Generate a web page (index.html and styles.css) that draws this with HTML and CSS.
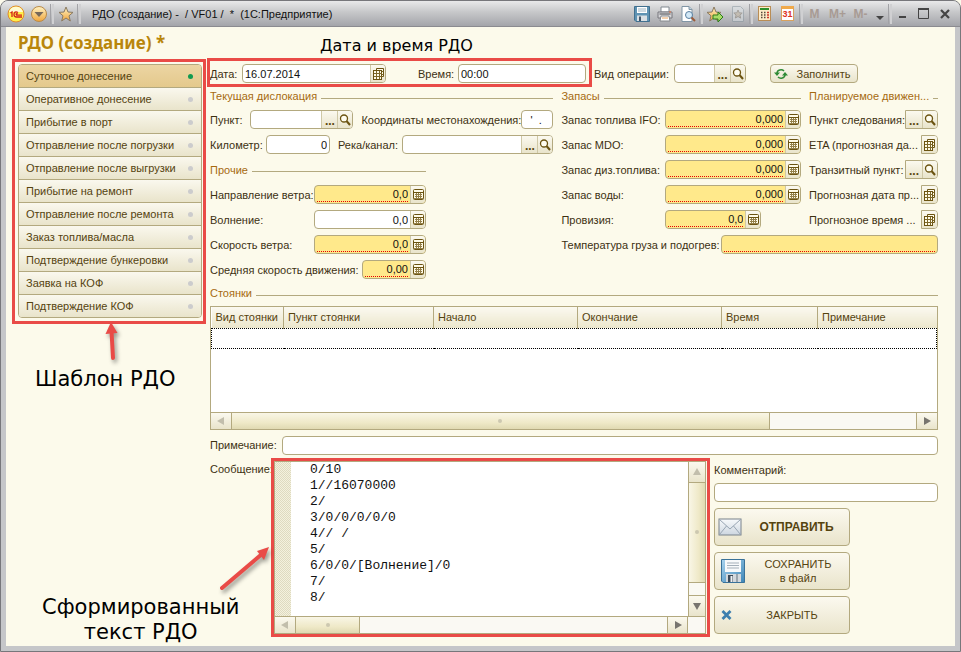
FILE: index.html
```html
<!DOCTYPE html>
<html lang="ru">
<head>
<meta charset="utf-8">
<title>РДО (создание)</title>
<link rel="stylesheet" href="styles.css">
</head>
<body>
<svg class="defs" aria-hidden="true">
  <defs>
    <linearGradient id="gold" x1="0" y1="0" x2="0" y2="1"><stop offset="0" stop-color="#fff3c4"/><stop offset="1" stop-color="#f0a63c"/></linearGradient>
    <linearGradient id="paleblue" x1="0" y1="0" x2="0" y2="1"><stop offset="0" stop-color="#f8fafc"/><stop offset="1" stop-color="#cdd6e0"/></linearGradient>
    <linearGradient id="blue" x1="0" y1="0" x2="1" y2="1"><stop offset="0" stop-color="#a9d4ee"/><stop offset="1" stop-color="#3d86b8"/></linearGradient>
  </defs>
  <symbol id="calc" viewBox="0 0 11 12"><rect x=".5" y=".5" width="10" height="10" rx="1" fill="#fffbe8" stroke="#6b5310"/><path d="M1 3.500h9" stroke="#6b5310"/><path d="M2 5.500h7M2 7.500h7M1 9.500h9M3.500 4v6M5.500 4v6M7.500 4v6" stroke="#94804a" fill="none"/></symbol>
  <symbol id="cal" viewBox="0 0 11 12"><path d="M3.500 2.500V.5h7v8h-2" fill="#fffbe8" stroke="#6b5310"/><rect x=".5" y="2.500" width="8" height="9" fill="#fffbe8" stroke="#6b5310"/><path d="M1 5.500h8M1 8.500h8M3.500 3v8M6.500 3v8M9 3.500h1.500M9 6.500h1.500" stroke="#7d6828" fill="none"/></symbol>
  <symbol id="loupe" viewBox="0 0 12 12"><circle cx="5" cy="4.500" r="3.500" fill="#fffdf0" stroke="#6b5310" stroke-width="1.300"/><path d="M7.500 7l3.500 4" stroke="#6b5310" stroke-width="2"/></symbol>
  <symbol id="star" viewBox="0 0 16 16"><path d="M8 1l2 5 5 .4-4 3.400 1.300 5.200L8 12l-4.300 3L5 9.800 1 6.400 6 6z" fill="url(#gold)" stroke="#8a7a62"/></symbol>
  <symbol id="tri" viewBox="0 0 8 8"><path d="M0 4l7-4v8z"/></symbol>
</svg>

<div class="window">
  <header class="titlebar">
    <button class="tb" aria-label="Главное меню"><svg width="18" height="18" viewBox="0 0 18 18"><circle cx="9" cy="9" r="8" fill="#fff04a" stroke="#e08a2c"/><path d="M2 7a7.300 7.300 0 0 1 14 0" fill="#fffbd0"/><path d="M3.500 8l1.500-1v5M11 7.500C8.500 5.800 7 7.500 7 9.500s1 2.500 2.500 2.500H15M10.700 9c-1.500-1.200-2 .3-1 1.200H15" stroke="#d3231b" stroke-width="1.300" fill="none"/></svg></button>
    <button class="tb" aria-label="Меню"><svg width="18" height="18" viewBox="0 0 18 18"><circle cx="9" cy="9" r="7.500" fill="url(#gold)" stroke="#b98a4a"/><path d="M4.500 7h9L9 12z" fill="#76685a"/></svg></button>
    <span class="sep"></span>
    <button class="tb" aria-label="Избранное"><svg width="16" height="16"><use href="#star"/></svg></button>
    <span class="sep"></span>
    <h1 class="caption">РДО (создание) -&nbsp; / VF01 /&nbsp; * &nbsp;(1С:Предприятие)</h1>
    <div class="tools">
      <button class="tb" aria-label="Сохранить"><svg width="16" height="16" viewBox="0 0 16 16"><path d="M.5.500h15v15H2L.5 14z" fill="#5f93b3" stroke="#41708f"/><path d="M3 1h10v6H3z" fill="#fff"/><path d="M4 3h8M4 5h8" stroke="#9db4c2"/><path d="M3 9.500h10V15H3z" fill="#d9dfe3"/><path d="M5 10.500h2V15H5z" fill="#42566a"/></svg></button>
      <button class="tb" aria-label="Печать"><svg width="16" height="16" viewBox="0 0 16 16"><path d="M4 1h8v5H4z" fill="#fff" stroke="#828a92"/><path d="M1 6h14v6H1z" fill="#d5d5d8" stroke="#77777c"/><path d="M2.500 8h11" stroke="#4e5055"/><path d="M4 10h8l1 5H3z" fill="#fff" stroke="#85888c"/><path d="M5 12h6" stroke="#e9a35c"/><path d="M12 6h2" stroke="#e16d3c" stroke-width="1"/></svg></button>
      <button class="tb" aria-label="Просмотр"><svg width="16" height="16" viewBox="0 0 16 16"><path d="M2 .5h7l3 3v12H2z" fill="#fff" stroke="#8095a5"/><path d="M9 .5v3h3" fill="#bfd3e0" stroke="#8095a5"/><circle cx="9" cy="9" r="3.500" fill="#d3e9f7" stroke="#597fa0"/><path d="M11.500 11.500L15 15" stroke="#9b5b3a" stroke-width="2"/></svg></button>
      <span class="sep"></span>
      <button class="tb" aria-label="В избранное"><svg width="18" height="16" viewBox="0 0 18 16"><use href="#star" width="16" height="16"/><path d="M7 9h5V6l5 5-5 5v-3H7z" fill="#a9dc67" stroke="#2c7d1a"/></svg></button>
      <button class="tb dim" aria-label="Список избранного"><svg width="14" height="16" viewBox="0 0 14 16"><path d="M1.500.5h8l3 3v12h-11z" fill="#dbe1e5" stroke="#87959e"/><path d="M7 4l1.200 2.800 3 .3-2.300 2 .8 3L7 10.500 4.300 12l.8-3-2.300-2 3-.2z" fill="#c4b7a0" stroke="#847c70"/></svg></button>
      <span class="sep"></span>
      <button class="tb" aria-label="Калькулятор"><svg width="13" height="15" viewBox="0 0 13 15"><rect x=".5" y=".5" width="12" height="14" fill="#fdebc8" stroke="#b98d55"/><path d="M2 2h9v2H2z" fill="#2c8f2c"/><path d="M3 6.500h1.500M6 6.500h1.500M3 9h1.500M6 9h1.500M3 11.500h1.500M6 11.500h1.500" stroke="#57493c" stroke-width="1.500"/><path d="M9 6.500h2M9 9h2M9 11.500h2" stroke="#d0382b" stroke-width="1.500"/></svg></button>
      <button class="tb" aria-label="Календарь"><span class="date-icon">31</span></button>
      <span class="sep"></span>
      <button class="tb mem">M</button>
      <button class="tb mem">M+</button>
      <button class="tb mem">M-</button>
      <button class="tb slim" aria-label="Ещё"><svg width="8" height="14" viewBox="0 0 8 14"><path d="M0 9h8l-4 4z" fill="#444"/></svg></button>
      <span class="sep"></span>
      <button class="tb win" aria-label="Свернуть"><svg width="11" height="11" viewBox="0 0 11 11"><path d="M2 9h7" stroke="#444" stroke-width="2"/></svg></button>
      <button class="tb win" aria-label="Развернуть"><svg width="11" height="11" viewBox="0 0 11 11"><path d="M.5 1v9.500h10V1" fill="none" stroke="#444"/><path d="M0 1h11" stroke="#444" stroke-width="2"/></svg></button>
      <button class="tb win" aria-label="Закрыть"><svg width="10" height="10" viewBox="0 0 10 10"><path d="M1 1l8 8M9 1L1 9" stroke="#444" stroke-width="2.200"/></svg></button>
    </div>
  </header>

  <main class="client">
    <h2 class="heading">РДО (создание) *</h2>
    <div class="columns">
      <nav class="side framed">
        <ul class="templates">
          <li><button class="active">Суточное донесение</button></li>
          <li><button>Оперативное донесение</button></li>
          <li><button>Прибытие в порт</button></li>
          <li><button>Отправление после погрузки</button></li>
          <li><button>Отправление после выгрузки</button></li>
          <li><button>Прибытие на ремонт</button></li>
          <li><button>Отправление после ремонта</button></li>
          <li><button>Заказ топлива/масла</button></li>
          <li><button>Подтверждение бункеровки</button></li>
          <li><button>Заявка на КОФ</button></li>
          <li><button>Подтверждение КОФ</button></li>
        </ul>
      </nav>

      <form class="form">
        <div class="row top">
          <div class="row when framed">
            <label for="date" class="w32">Дата:</label>
            <div class="field f144"><input id="date" value="16.07.2014"><button type="button" aria-label="Выбрать дату"><svg width="11" height="12"><use href="#cal"/></svg></button></div>
            <label for="time" class="w40 ml32">Время:</label>
            <div class="field grow"><input id="time" value="00:00"></div>
          </div>
          <label for="op" class="w80">Вид операции:</label>
          <div class="field f72"><input id="op"><button type="button" class="dots">...</button><button type="button" aria-label="Найти"><svg width="12" height="12"><use href="#loupe"/></svg></button></div>
          <button type="button" class="push fill"><svg width="14" height="12" viewBox="0 0 14 12"><path d="M3 5a4 3.500 0 0 1 7-2M11 7a4 3.500 0 0 1-7 2" fill="none" stroke="#2f8a35" stroke-width="1.600"/><path d="M0 4.500h6L3 8zM8 7.500h6L11 4z" fill="#2f8a35"/></svg><span>Заполнить</span></button>
        </div>

        <div class="groups">
          <div class="left">
            <section>
              <h3><span>Текущая дислокация</span></h3>
              <div class="row">
                <label for="pt" class="w40">Пункт:</label>
                <div class="field grow"><input id="pt"><button type="button" class="dots">...</button><button type="button" aria-label="Найти"><svg width="12" height="12"><use href="#loupe"/></svg></button></div>
                <label for="xy" class="w160 ml8">Координаты местонахождения:</label>
                <div class="field f32"><input id="xy" value="  '  ."></div>
              </div>
              <div class="row">
                <label for="km" class="w56">Километр:</label>
                <div class="field f64"><input id="km" class="num" value="0"></div>
                <label for="river" class="w64 ml8">Река/канал:</label>
                <div class="field grow"><input id="river"><button type="button" class="dots">...</button><button type="button" aria-label="Найти"><svg width="12" height="12"><use href="#loupe"/></svg></button></div>
              </div>
            </section>
            <section class="other">
              <h3 class="tall"><span>Прочие</span></h3>
              <div class="row"><label for="wd" class="w104">Направление ветра:</label><div class="field req grow"><input id="wd" class="num" value="0,0"><button type="button" aria-label="Калькулятор"><svg width="11" height="12"><use href="#calc"/></svg></button></div></div>
              <div class="row"><label for="wave" class="w104">Волнение:</label><div class="field grow"><input id="wave" class="num" value="0,0"><button type="button" aria-label="Калькулятор"><svg width="11" height="12"><use href="#calc"/></svg></button></div></div>
              <div class="row"><label for="ws" class="w104">Скорость ветра:</label><div class="field req grow"><input id="ws" class="num" value="0,0"><button type="button" aria-label="Калькулятор"><svg width="11" height="12"><use href="#calc"/></svg></button></div></div>
              <div class="row"><label for="avg" class="w152">Средняя скорость движения:</label><div class="field req grow"><input id="avg" class="num" value="0,00"><button type="button" aria-label="Калькулятор"><svg width="11" height="12"><use href="#calc"/></svg></button></div></div>
            </section>
          </div>

          <section class="stock">
            <h3><span>Запасы</span></h3>
            <div class="row"><label for="ifo" class="w104">Запас топлива IFO:</label><div class="field req grow"><input id="ifo" class="num" value="0,000"><button type="button" aria-label="Калькулятор"><svg width="11" height="12"><use href="#calc"/></svg></button></div></div>
            <div class="row"><label for="mdo" class="w104">Запас MDO:</label><div class="field req grow"><input id="mdo" class="num" value="0,000"><button type="button" aria-label="Калькулятор"><svg width="11" height="12"><use href="#calc"/></svg></button></div></div>
            <div class="row"><label for="dt" class="w104">Запас диз.топлива:</label><div class="field req grow"><input id="dt" class="num" value="0,000"><button type="button" aria-label="Калькулятор"><svg width="11" height="12"><use href="#calc"/></svg></button></div></div>
            <div class="row"><label for="water" class="w104">Запас воды:</label><div class="field req grow"><input id="water" class="num" value="0,000"><button type="button" aria-label="Калькулятор"><svg width="11" height="12"><use href="#calc"/></svg></button></div></div>
            <div class="row"><label for="food" class="w104">Провизия:</label><div class="field req f96"><input id="food" class="num" value="0,0"><button type="button" aria-label="Калькулятор"><svg width="11" height="12"><use href="#calc"/></svg></button></div></div>
          </section>

          <section class="plan">
            <h3><span>Планируемое движен...</span></h3>
            <div class="row"><span class="lbl">Пункт следования:</span><div class="field bare"><button type="button" class="dots">...</button><button type="button" aria-label="Найти"><svg width="12" height="12"><use href="#loupe"/></svg></button></div></div>
            <div class="row"><span class="lbl">ETA (прогнозная да...</span><div class="field bare"><button type="button" aria-label="Выбрать дату"><svg width="11" height="12"><use href="#cal"/></svg></button></div></div>
            <div class="row"><span class="lbl">Транзитный пункт:</span><div class="field bare"><button type="button" class="dots">...</button><button type="button" aria-label="Найти"><svg width="12" height="12"><use href="#loupe"/></svg></button></div></div>
            <div class="row"><span class="lbl">Прогнозная дата пр...</span><div class="field bare"><button type="button" aria-label="Выбрать дату"><svg width="11" height="12"><use href="#cal"/></svg></button></div></div>
            <div class="row"><span class="lbl">Прогнозное время ...</span><div class="field bare"><button type="button" aria-label="Выбрать дату"><svg width="11" height="12"><use href="#cal"/></svg></button></div></div>
          </section>

          <div class="row temp"><label for="temp" class="w160">Температура груза и подогрев:</label><div class="field req grow"><input id="temp"></div></div>
        </div>

        <section>
          <h3><span>Стоянки</span></h3>
          <div class="grid">
            <table>
              <colgroup><col class="c1"><col class="c2"><col class="c3"><col class="c3"><col class="c4"><col></colgroup>
              <thead><tr><th>Вид стоянки</th><th>Пункт стоянки</th><th>Начало</th><th>Окончание</th><th>Время</th><th>Примечание</th></tr></thead>
              <tbody><tr><td></td><td></td><td></td><td></td><td></td><td></td></tr></tbody>
            </table>
            <div class="scroll">
              <button type="button" class="off" aria-label="Влево"><svg width="8" height="8"><use href="#tri"/></svg></button>
              <div class="thumb t-wide"></div><div class="track t-rest"></div>
              <button type="button" aria-label="Вправо"><svg class="flip" width="8" height="8"><use href="#tri"/></svg></button>
            </div>
          </div>
        </section>

        <div class="row note"><label for="note" class="w72">Примечание:</label><div class="field grow"><input id="note"></div></div>

        <div class="bottom">
          <label for="msg" class="w64 msg-label">Сообщение:</label>
          <div class="message framed">
            <div class="message-main">
              <div class="gutter"></div>
              <textarea id="msg" rows="10" wrap="off">0/10
1//16070000
2/
3/0/0/0/0/0
4// /
5/
6/0/0/[Волнение]/0
7/
8/</textarea>
              <div class="scroll vert">
                <button type="button" class="off" aria-label="Вверх"><svg class="up" width="8" height="8"><use href="#tri"/></svg></button>
                <div class="thumb t-tall"></div><div class="track t-short"></div>
                <button type="button" aria-label="Вниз"><svg class="down" width="8" height="8"><use href="#tri"/></svg></button>
              </div>
            </div>
            <div class="scroll corner">
              <button type="button" class="off" aria-label="Влево"><svg width="8" height="8"><use href="#tri"/></svg></button>
              <div class="thumb t-small"></div><div class="track t-large"></div>
              <button type="button" aria-label="Вправо"><svg class="flip" width="8" height="8"><use href="#tri"/></svg></button>
            </div>
          </div>
          <div class="actions">
            <label for="comment">Комментарий:</label>
            <div class="field"><input id="comment"></div>
            <button type="button" class="push big"><svg width="24" height="18" viewBox="0 0 24 18"><rect x="1" y="1" width="22" height="16" fill="url(#paleblue)" stroke="#78828c"/><path d="M1.500 1.500L12 11 22.500 1.500M1.500 16.500L8.500 8M22.500 16.500L15.500 8" fill="none" stroke="#98a5b3"/></svg><b>ОТПРАВИТЬ</b></button>
            <button type="button" class="push big"><svg class="inset" width="24" height="24" viewBox="0 0 24 24"><path d="M.5.500h23v23H2L.5 22z" fill="url(#blue)" stroke="#3a7299"/><path d="M4 1h16v12H4z" fill="#f8fafb"/><path d="M6 4h12M6 6.500h12M6 9h12" stroke="#a5b0b9"/><path d="M5 15h15v8H5z" fill="#d4d9dd"/><path d="M7 16h5v7H7z" fill="#3c4a58"/><path d="M9.500 17h2v6h-2z" fill="#eef1f3"/><path d="M15 15h2v8h-2z" fill="#9ba5ad"/></svg><span>СОХРАНИТЬ<br>в файл</span></button>
            <button type="button" class="push big"><svg class="inset" width="12" height="10" viewBox="0 0 12 10"><path d="M1.500 1l8 8M9.500 1l-8 8" stroke="#3d7fae" stroke-width="2.800"/></svg><span>ЗАКРЫТЬ</span></button>
          </div>
        </div>
      </form>
    </div>

    <p class="callout c-date">Дата и время РДО</p>
    <p class="callout c-template">Шаблон РДО</p>
    <p class="callout c-text">Сформированный<br>текст РДО</p>
    <svg class="arrow a-up" width="20" height="44" viewBox="0 0 20 44"><path d="M9.500 9l1.500 27" stroke="#e94b47" stroke-width="4" stroke-linecap="round"/><path d="M9 0L3.500 12l12-1z" fill="#e94b47"/></svg>
    <svg class="arrow a-diag" width="58" height="52" viewBox="0 0 58 52"><path d="M4 43L44 9" stroke="#e94b47" stroke-width="4" stroke-linecap="round"/><path d="M51 2L39 6l7 9z" fill="#e94b47"/></svg>
  </main>
</div>
</body>
</html>
```
FILE: styles.css
```css
:root {
  --line: #b3a97f;
  --ink: #4b3c12;
  --paper: #fcfaeb;
  --red: #e94b47;
}
* { box-sizing: border-box; }
body {
  margin: 0;
  background: #fcfaeb;
  font: 11px/14px "Liberation Sans", Arial, sans-serif;
  color: #3d3112;
}
button, input, textarea { font: inherit; color: inherit; margin: 0; padding: 0; }
h1, h2, h3, p, ul { margin: 0; padding: 0; font-size: inherit; font-weight: normal; }
.defs { position: absolute; width: 0; height: 0; }

.window {
  display: flex;
  flex-direction: column;
  min-height: 100vh;
  padding: 0 5px 5px;
  background: #c5c6c9;
  border: 1px solid #77777b;
  border-radius: 8px 8px 0 0;
}
.titlebar {
  display: flex;
  align-items: center;
  height: 26px;
  margin: 0 -5px;
  padding: 0 5px 0 3px;
  border-bottom: 1px solid #8b8b90;
  border-radius: 7px 7px 0 0;
  background: linear-gradient(#e9e9ea, #c6c7c9 45%, #a4a5aa);
}
.tb {
  display: flex;
  align-items: center;
  justify-content: center;
  width: 23px;
  height: 22px;
  border: 0;
  background: none;
}
.sep { width: 4px; height: 20px; border-left: 1px solid #a2a2a6; border-right: 2px solid #d0d0d2; }
.slim { width: 16px; }
.win { width: 21px; }
.dim { opacity: .5; }
.mem { color: #a89b94; font-weight: bold; font-size: 12px; }
.caption { color: #111; font-size: 11px; margin-left: 11px; white-space: nowrap; }
.tools { display: flex; align-items: center; margin-left: auto; }
.date-icon {
  width: 13px;
  height: 15px;
  border: 1px solid #d9a25e;
  border-top: 3px solid #f0a94a;
  background: #fff;
  color: #dd3322;
  font: bold 9px/11px "Liberation Sans", sans-serif;
}

.client { position: relative; flex: 1; padding: 6px 17px 11px 12px; background: var(--paper); }
.heading { font: bold 17px/20px "Noto Sans", sans-serif; color: #b9860b; margin-bottom: 11px; }
.columns { display: flex; gap: 8px; }
.side { flex: none; width: 184px; align-self: flex-start; }
.form { flex: 1; min-width: 0; }

.framed { position: relative; }
.framed::after {
  content: "";
  position: absolute;
  inset: -5px -4px -6px -6px;
  border: 3px solid var(--red);
  pointer-events: none;
}
.when.framed::after { inset: -6px -6px -4px -3px; }
.message.framed::after { inset: -4px -5px -4px -4px; }

.templates { list-style: none; border: 1px solid var(--line); border-radius: 4px; overflow: hidden; }
.templates li + li { border-top: 1px solid var(--line); }
.templates button {
  display: flex;
  align-items: center;
  justify-content: space-between;
  width: 100%;
  height: 22px;
  padding: 0 8px 0 7px;
  border: 0;
  color: #55430f;
  background: linear-gradient(#faf8ee, #e9e4cb);
}
.templates button::after { content: ""; width: 5px; height: 5px; border-radius: 50%; background: #cccccd; }
.templates .active { background: linear-gradient(#ecd5a3, #e4c98c); }
.templates .active::after { background: #129a50; }

.row { display: flex; align-items: center; height: 25px; }
.top { height: 19px; }
.top .w80 { margin-left: 8px; }
.when { width: 376px; height: 19px; }
label, .lbl { flex: none; white-space: nowrap; }
.lbl { flex: 1; min-width: 0; }
.w32 { width: 32px; }
.w40 { width: 40px; }
.w56 { width: 56px; }
.w64 { width: 64px; }
.w72 { width: 72px; }
.w80 { width: 80px; }
.w104 { width: 104px; }
.w152 { width: 152px; }
.w160 { width: 160px; }
.ml8 { margin-left: 8px; }
.ml32 { margin-left: 32px; }

.field {
  display: flex;
  height: 19px;
  border: 1px solid var(--line);
  border-radius: 4px;
  background: #fff;
  overflow: hidden;
}
.grow { flex: 1; min-width: 0; }
.f32 { width: 32px; }
.f64 { width: 64px; }
.f72 { width: 72px; }
.f96 { width: 96px; }
.f144 { width: 144px; }
.field input {
  flex: 1;
  min-width: 0;
  width: 0;
  padding: 0 2px;
  border: 0;
  outline: 0;
  background: none;
  color: #111;
}
.field .num { text-align: right; }
.field.req { background: #ffe98b; }
.field.req input { margin: 0 2px 1px; padding: 0; border-bottom: 1px dotted #e60000; }
.field button {
  display: flex;
  align-items: center;
  justify-content: center;
  width: 15px;
  border: 0;
  border-left: 1px solid #cfc8a6;
  background: linear-gradient(#fbf9ef, #e9e4cb);
  color: #5b4710;
  font-weight: bold;
}
.field .dots { width: 16px; padding-top: 3px; font-size: 12px; }
.bare { border-radius: 0 4px 4px 0; }
.bare button:first-child { border-left: 0; }

.push {
  display: flex;
  align-items: center;
  border: 1px solid var(--line);
  border-radius: 4px;
  background: linear-gradient(#fbf9ef, #e9e4cb);
  color: #55430f;
}
.push span, .push b { flex: 1; text-align: center; }
.fill { width: 88px; height: 19px; margin-left: 24px; padding: 0 4px 0 3px; }
.fill span { padding-left: 6px; }

.groups {
  display: grid;
  grid-template-columns: 344fr 240fr 128fr;
  grid-template-rows: auto 1fr;
  column-gap: 8px;
  margin-top: 2px;
}
.left { grid-row: 1 / 3; }
.other { width: 216px; }
.temp { grid-column: 2 / 4; }
h3 {
  display: flex;
  align-items: center;
  gap: 4px;
  height: 22px;
  color: #a66a10;
  white-space: nowrap;
}
h3::after { content: ""; flex: 1; height: 1px; margin-top: 4px; background: var(--line); }
.tall { height: 25px; }

.grid { border: 1px solid var(--line); background: #fff; margin-top: 2px; }
table { width: 100%; table-layout: fixed; border-collapse: collapse; margin-bottom: 63px; }
.c1 { width: 72px; }
.c2 { width: 150px; }
.c3 { width: 144px; }
.c4 { width: 96px; }
th {
  height: 21px;
  padding: 0 4px;
  border-right: 1px solid var(--line);
  background: linear-gradient(#fbf9f0, #ebe6cc);
  color: #55430f;
  font-weight: normal;
  text-align: left;
  white-space: nowrap;
}
th:last-child { border-right: 0; }
tbody tr { border: 1px dotted #000; }
td { height: 20px; padding: 0; }

.scroll { display: flex; height: 17px; border-top: 1px solid var(--line); background: #faf9f3; }
.scroll button {
  display: flex;
  align-items: center;
  justify-content: center;
  flex: none;
  width: 21px;
  border: 0;
  border-right: 1px solid var(--line);
  background: linear-gradient(#fbf9ef, #e9e4cb);
  fill: #77746e;
}
.scroll button:last-child { border-right: 0; border-left: 1px solid var(--line); }
.scroll .off { fill: #c2beac; }
.flip { transform: rotate(180deg); }
.up { transform: rotate(90deg); }
.down { transform: rotate(270deg); }
.thumb {
  display: flex;
  align-items: center;
  justify-content: center;
  border-right: 1px solid var(--line);
  background: linear-gradient(#f9f6e6, #efe9c8 60%, #e0d9b2);
}
.thumb::after { content: ""; width: 4px; height: 4px; border-radius: 50%; background: #cdc8b0; }
.t-wide { flex: 539; }
.t-rest { flex: 147; }
.t-small { flex: 64; }
.t-large { flex: 309; }
.t-tall { flex: 101; }
.t-short { flex: 12; }
.vert { flex-direction: column; width: 17px; height: auto; border-top: 0; border-left: 1px solid var(--line); }
.vert button { width: 100%; height: 21px; border-right: 0; border-bottom: 1px solid var(--line); }
.vert button:last-child { border-left: 0; border-bottom: 0; border-top: 1px solid var(--line); }
.vert .thumb { border-right: 0; border-bottom: 1px solid var(--line); background: linear-gradient(90deg, #f9f6e6, #efe9c8 60%, #e0d9b2); }
.corner { padding-right: 17px; }
.scroll.corner button:last-child { border-right: 1px solid var(--line); }

.note { margin-top: 3px; }
.bottom { display: flex; margin-top: 3px; }
.msg-label { padding-top: 1px; }
.message { flex: 1; min-width: 0; border: 1px solid var(--line); background: #fff; }
.message-main { display: flex; height: 154px; }
.gutter { width: 16px; background: repeating-conic-gradient(#dedac0 0 25%, #f4f1de 0 50%) 0 0 / 2px 2px; }
textarea {
  flex: 1;
  min-width: 0;
  padding: 0 0 0 19px;
  border: 0;
  outline: 0;
  resize: none;
  overflow: hidden;
  background: #fff;
  color: #111;
  font: 13px/16px "Liberation Mono", monospace;
}
.actions { display: flex; flex-direction: column; gap: 6px; width: 224px; margin-left: 8px; }
.actions label { padding-top: 2px; }
.big { width: 136px; height: 38px; padding: 0 4px 0 3px; }
.big b { font-size: 12px; }
.big .inset { margin-left: 3px; }
.big b, .big span { padding-left: 6px; }

.callout {
  position: absolute;
  color: #000;
  font: 21px/25px "DejaVu Sans", sans-serif;
  text-align: center;
  white-space: nowrap;
}
.c-date { left: 314px; top: 6px; font-size: 16px; }
.c-template { left: 29px; top: 340px; }
.c-text { left: 36px; top: 568px; }
.arrow { position: absolute; filter: drop-shadow(2px 3px 2px rgba(0, 0, 0, .4)); }
.a-up { left: 96px; top: 295px; }
.a-diag { left: 212px; top: 518px; }
```
